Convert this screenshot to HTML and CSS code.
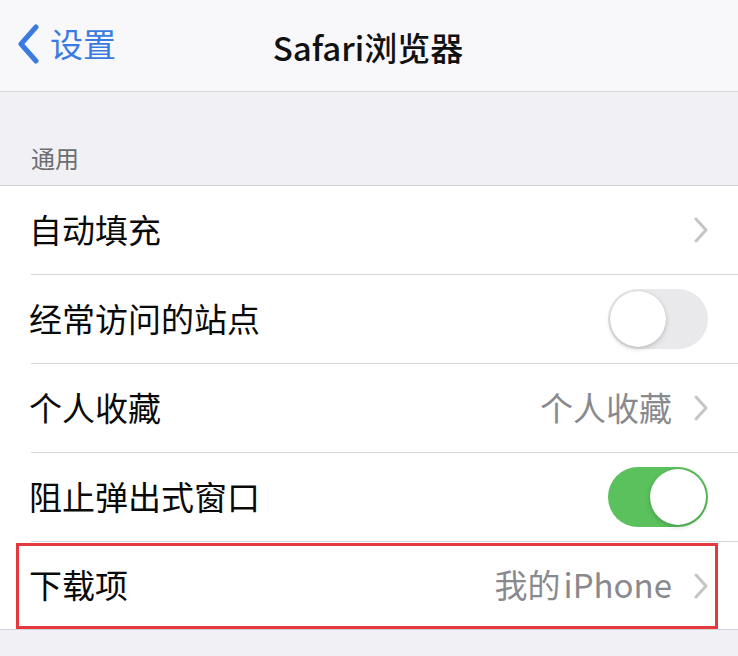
FILE: index.html
```html
<!DOCTYPE html>
<html lang="zh">
<head>
<meta charset="utf-8">
<link rel="stylesheet" href="styles.css">
</head>
<body>
<div class="screen">
  <header class="navbar">
    <div class="back">
      <svg class="back-icon" width="24" height="40" viewBox="0 0 24 40"><path d="M20 3 L5 20 L20 37" fill="none" stroke="#3a7be2" stroke-width="5" stroke-linecap="round" stroke-linejoin="round"/></svg>
      <span class="back-text">设置</span>
    </div>
    <div class="title">Safari浏览器</div>
  </header>
  <div class="section-head">通用</div>
  <div class="group">
    <div class="row">
      <span class="label">自动填充</span>
      <span class="right"><svg class="chev" width="14" height="26" viewBox="0 0 14 26"><path d="M2 2 L12 13 L2 24" fill="none" stroke="#c5c5c8" stroke-width="3" stroke-linecap="round" stroke-linejoin="round"/></svg></span>
    </div>
    <div class="row">
      <span class="label">经常访问的站点</span>
      <span class="right"><span class="toggle off"><span class="knob"></span></span></span>
    </div>
    <div class="row">
      <span class="label">个人收藏</span>
      <span class="right"><span class="value">个人收藏</span><svg class="chev" width="14" height="26" viewBox="0 0 14 26"><path d="M2 2 L12 13 L2 24" fill="none" stroke="#c5c5c8" stroke-width="3" stroke-linecap="round" stroke-linejoin="round"/></svg></span>
    </div>
    <div class="row">
      <span class="label">阻止弹出式窗口</span>
      <span class="right"><span class="toggle on"><span class="knob"></span></span></span>
    </div>
    <div class="row highlight">
      <span class="label">下载项</span>
      <span class="right"><span class="value">我的<span class="thin"> </span>iPhone</span><svg class="chev" width="14" height="26" viewBox="0 0 14 26"><path d="M2 2 L12 13 L2 24" fill="none" stroke="#c5c5c8" stroke-width="3" stroke-linecap="round" stroke-linejoin="round"/></svg></span>
    </div>
  </div>
</div>
</body>
</html>
```
FILE: styles.css
```css
* { box-sizing: border-box; }
html, body { margin: 0; padding: 0; }
body {
  width: 738px;
  height: 656px;
  overflow: hidden;
  background: #f1f1f5;
  font-family: "Noto Sans CJK SC", "Noto Sans", "Liberation Sans", sans-serif;
}
.screen { display: flex; flex-direction: column; }
.navbar {
  height: 92px;
  background: #f8f8fa;
  border-bottom: 1px solid #d9d9dd;
  display: flex;
  align-items: center;
  position: relative;
}
.back {
  display: flex;
  align-items: center;
  padding-left: 16px;
  gap: 10px;
  margin-top: -4px;
}
.back-text {
  color: #3a7be2;
  font-size: 33px;
  line-height: 1;
}
.title {
  position: absolute;
  left: 0; right: 0;
  top: 28px;
  text-align: center;
  font-size: 33px;
  font-weight: 500;
  color: #111;
  line-height: 1.2;
  padding-right: 2px;
}
.section-head {
  height: 94px;
  padding: 50px 0 0 31px;
  font-size: 24px;
  color: #6d6d72;
  line-height: 1.3;
  border-bottom: 1px solid #d3d3d7;
}
.group {
  background: #fff;
  border-bottom: 1px solid #d3d3d7;
}
.row {
  height: 89px;
  margin-left: 31px;
  padding-right: 30px;
  display: flex;
  align-items: center;
  justify-content: space-between;
  border-bottom: 1px solid #d5d5d9;
  position: relative;
}
.row:last-child { border-bottom: none; height: 87px; }
.label {
  font-size: 33px;
  color: #0a0a0a;
  line-height: 1;
  margin-top: -2px;
  margin-left: -2px;
}
.right {
  display: flex;
  align-items: center;
  gap: 22px;
}
.value {
  font-size: 33px;
  color: #8a8a8e;
  line-height: 1;
  margin-top: -2px;
}
.thin { font-size: 14px; }
.chev { display: block; }
.toggle {
  width: 100px;
  height: 60px;
  border-radius: 30px;
  display: block;
  position: relative;
}
.toggle.off { background: #e9e9ec; }
.toggle.on { background: #5ac15c; }
.knob {
  position: absolute;
  top: 2px;
  width: 56px;
  height: 56px;
  border-radius: 50%;
  background: #fff;
  box-shadow: 0 2px 5px rgba(0,0,0,0.18), 0 0 1px rgba(0,0,0,0.2);
}
.toggle.off .knob { left: 2px; }
.toggle.on .knob { right: 2px; }
.highlight::after {
  content: "";
  position: absolute;
  left: -15px;
  right: 20px;
  top: 1px;
  bottom: 0;
  border: 3px solid #e5393f;
  pointer-events: none;
}
```
